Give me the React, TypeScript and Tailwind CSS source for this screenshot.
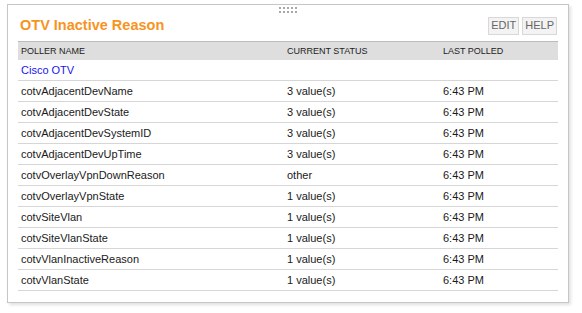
import React from "react";

const rows: [string, string, string][] = [
  ["cotvAdjacentDevName", "3 value(s)", "6:43 PM"],
  ["cotvAdjacentDevState", "3 value(s)", "6:43 PM"],
  ["cotvAdjacentDevSystemID", "3 value(s)", "6:43 PM"],
  ["cotvAdjacentDevUpTime", "3 value(s)", "6:43 PM"],
  ["cotvOverlayVpnDownReason", "other", "6:43 PM"],
  ["cotvOverlayVpnState", "1 value(s)", "6:43 PM"],
  ["cotvSiteVlan", "1 value(s)", "6:43 PM"],
  ["cotvSiteVlanState", "1 value(s)", "6:43 PM"],
  ["cotvVlanInactiveReason", "1 value(s)", "6:43 PM"],
  ["cotvVlanState", "1 value(s)", "6:43 PM"],
];

export default function App() {
  return (
    <div
      className="w-[582px] h-[313px] bg-white pt-[4px] pl-[7px]"
      style={{ fontFamily: '"Liberation Sans", Arial, sans-serif' }}
    >
      <div className="relative w-[562px] h-[299px] border border-[#c6c6c6] bg-white shadow-[2px_2px_3px_rgba(0,0,0,0.12)] pt-[11px] px-[10px]">
        <div className="absolute left-[271px] top-[2px] grid grid-cols-5 gap-x-[2px] gap-y-[2px]">
          {Array.from({ length: 10 }).map((_, i) => (
            <div key={i} className="w-[2px] h-[2px] bg-[#a8a8a8]" />
          ))}
        </div>
        <div className="flex items-center justify-between h-[19px] mb-[6px]">
          <div className="pl-[2px] text-[14.5px] font-bold text-[#f7941d] leading-none">
            OTV Inactive Reason
          </div>
          <div className="flex gap-[3px] pr-[1px]">
            <div className="h-[18px] px-[2px] border border-[#d8d8d8] bg-[#f3f3f3] text-[11px] text-[#666] flex items-center">
              EDIT
            </div>
            <div className="h-[18px] px-[2px] border border-[#d8d8d8] bg-[#f3f3f3] text-[11px] text-[#666] flex items-center">
              HELP
            </div>
          </div>
        </div>
        <div className="w-[540px]">
          <div className="grid grid-cols-[266px_156px_1fr] h-[19px] border-t border-[#bcbcbc] bg-[#dedede] text-[9px] text-[#222] items-center">
            <div className="pl-[3px] pt-[1px]">POLLER NAME</div>
            <div className="pl-[3px] pt-[1px]">CURRENT STATUS</div>
            <div className="pl-[3px] pt-[1px]">LAST POLLED</div>
          </div>
          <div className="h-[21px] border-b border-[#d6d6d6] flex items-center pl-[3px] pt-[1px] text-[11px] text-[#1515ee]">
            Cisco OTV
          </div>
          {rows.map((r) => (
            <div
              key={r[0]}
              className="grid grid-cols-[266px_156px_1fr] h-[21px] border-b border-[#d6d6d6] items-center text-[11px] text-[#1a1a1a] pt-[1px]"
            >
              <div className="pl-[3px]">{r[0]}</div>
              <div className="pl-[3px]">{r[1]}</div>
              <div className="pl-[3px]">{r[2]}</div>
            </div>
          ))}
        </div>
      </div>
    </div>
  );
}
